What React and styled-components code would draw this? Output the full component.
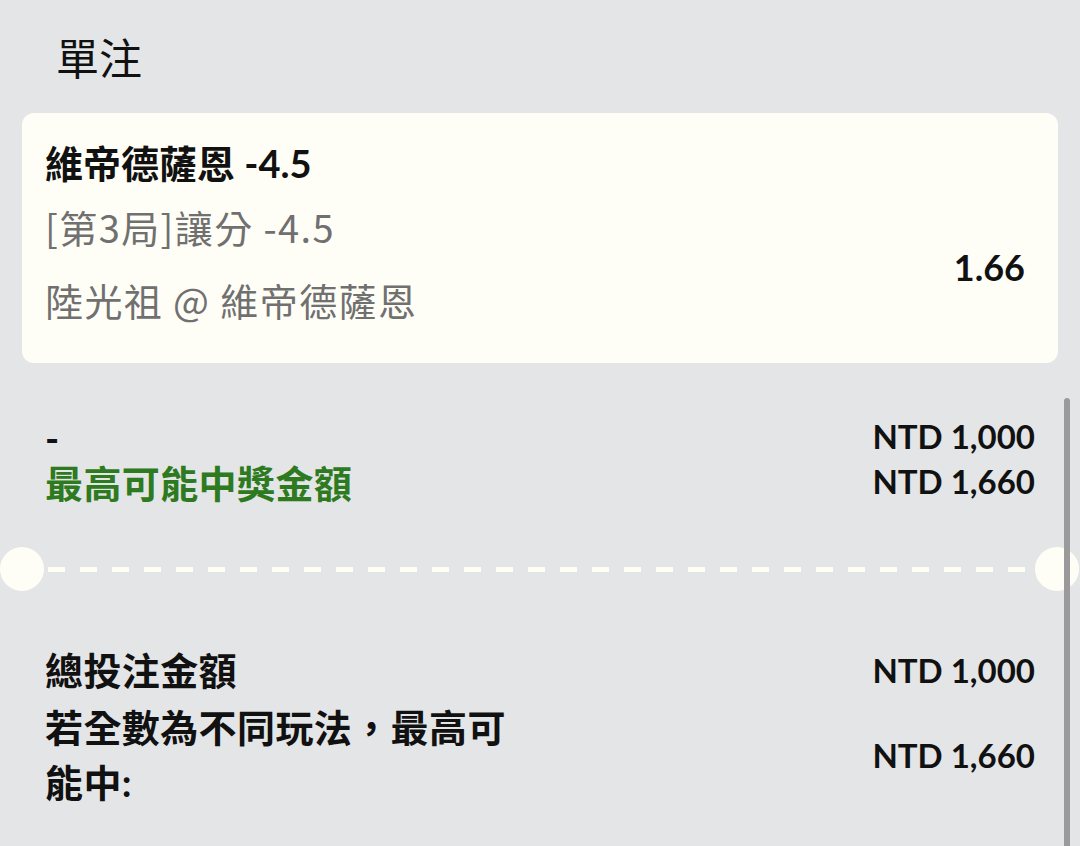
import React from 'react';
import styled, { createGlobalStyle } from 'styled-components';

const GlobalStyle = createGlobalStyle`
  html, body {
    margin: 0;
    padding: 0;
    background: #e4e5e7;
  }
  body {
    font-family: Lato, "Noto Sans CJK TC", sans-serif;
    color: #111;
    overflow: hidden;
  }
`;

const Page = styled.div`
  position: relative;
  width: 1080px;
  height: 846px;
  background: #e4e5e7;
  overflow: hidden;
`;

const Title = styled.h1`
  margin: 0;
  padding: 29px 0 0 56px;
  height: 60px;
  line-height: 60px;
  font-size: 43px;
  font-weight: 400;
  color: #111;
`;

const Card = styled.div`
  margin: 24px 22px 0;
  height: 250px;
  box-sizing: border-box;
  background: #fffef6;
  border-radius: 12px;
  display: flex;
  justify-content: space-between;
  padding: 0 33px 0 23px;
`;

const CardInfo = styled.div`
  display: flex;
  flex-direction: column;
  padding-top: 28px;
`;

const Selection = styled.div`
  font-size: 38px;
  line-height: 44px;
  height: 44px;
  font-weight: 700;
  color: #111;
`;

const Detail = styled.div`
  font-family: "Noto Sans CJK TC", "Noto Sans", sans-serif;
  font-size: 38px;
  line-height: 44px;
  height: 44px;
  font-weight: 400;
  letter-spacing: 1.4px;
  color: #707070;
  margin-top: ${(p) => p.gap}px;
`;

const Odds = styled.div`
  align-self: flex-end;
  margin-bottom: 74px;
  font-size: 36px;
  line-height: 44px;
  font-weight: 700;
  color: #111;
`;

const Section = styled.div`
  padding: ${(p) => p.pad};
  display: flex;
  flex-direction: column;
  gap: ${(p) => p.gap || 0}px;
`;

const Row = styled.div`
  display: flex;
  justify-content: space-between;
  align-items: center;
`;

const Label = styled.div`
  font-size: 38px;
  line-height: ${(p) => p.lh}px;
  font-weight: 700;
  letter-spacing: 0.4px;
  color: ${(p) => (p.green ? '#2e7a20' : '#111')};
  max-width: 470px;
`;

const Amount = styled.div`
  font-size: 33px;
  font-weight: 700;
  color: #111;
  white-space: nowrap;
  margin-top: ${(p) => p.shift || 0}px;
`;

const Divider = styled.div`
  display: flex;
  align-items: center;
  margin-top: 41px;
  height: 44px;
`;

const Notch = styled.div`
  width: 44px;
  height: 44px;
  border-radius: 50%;
  background: #fffef6;
  flex: none;
  margin: ${(p) => p.m};
`;

const Dashes = styled.div`
  flex: 1;
  height: 5px;
  margin: 0 2px 0 4px;
  background: repeating-linear-gradient(
    to right,
    #fffef6 0,
    #fffef6 17px,
    transparent 17px,
    transparent 32px
  );
`;

const Scrollbar = styled.div`
  position: absolute;
  right: 10px;
  top: 398px;
  bottom: 0;
  width: 6px;
  border-radius: 3px 3px 0 0;
  background: #9a9a9a;
`;

export default function App() {
  return (
    <Page>
      <GlobalStyle />
      <Title>單注</Title>

      <Card>
        <CardInfo>
          <Selection>維帝德薩恩 -4.5</Selection>
          <Detail gap={20}>[第3局]讓分 -4.5</Detail>
          <Detail gap={29}>陸光祖 @ 維帝德薩恩</Detail>
        </CardInfo>
        <Odds>1.66</Odds>
      </Card>

      <Section pad="53px 45px 0">
        <Row>
          <Label lh={45}>-</Label>
          <Amount shift={-6}>NTD 1,000</Amount>
        </Row>
        <Row>
          <Label lh={45} green>最高可能中獎金額</Label>
          <Amount shift={-6}>NTD 1,660</Amount>
        </Row>
      </Section>

      <Divider>
        <Notch m="0" />
        <Dashes />
        <Notch m="0 1px 0 0" />
      </Divider>

      <Section pad="51px 45px 0" gap={2}>
        <Row>
          <Label lh={56}>總投注金額</Label>
          <Amount>NTD 1,000</Amount>
        </Row>
        <Row>
          <Label lh={55}>若全數為不同玩法，最高可能中:</Label>
          <Amount>NTD 1,660</Amount>
        </Row>
      </Section>

      <Scrollbar />
    </Page>
  );
}
